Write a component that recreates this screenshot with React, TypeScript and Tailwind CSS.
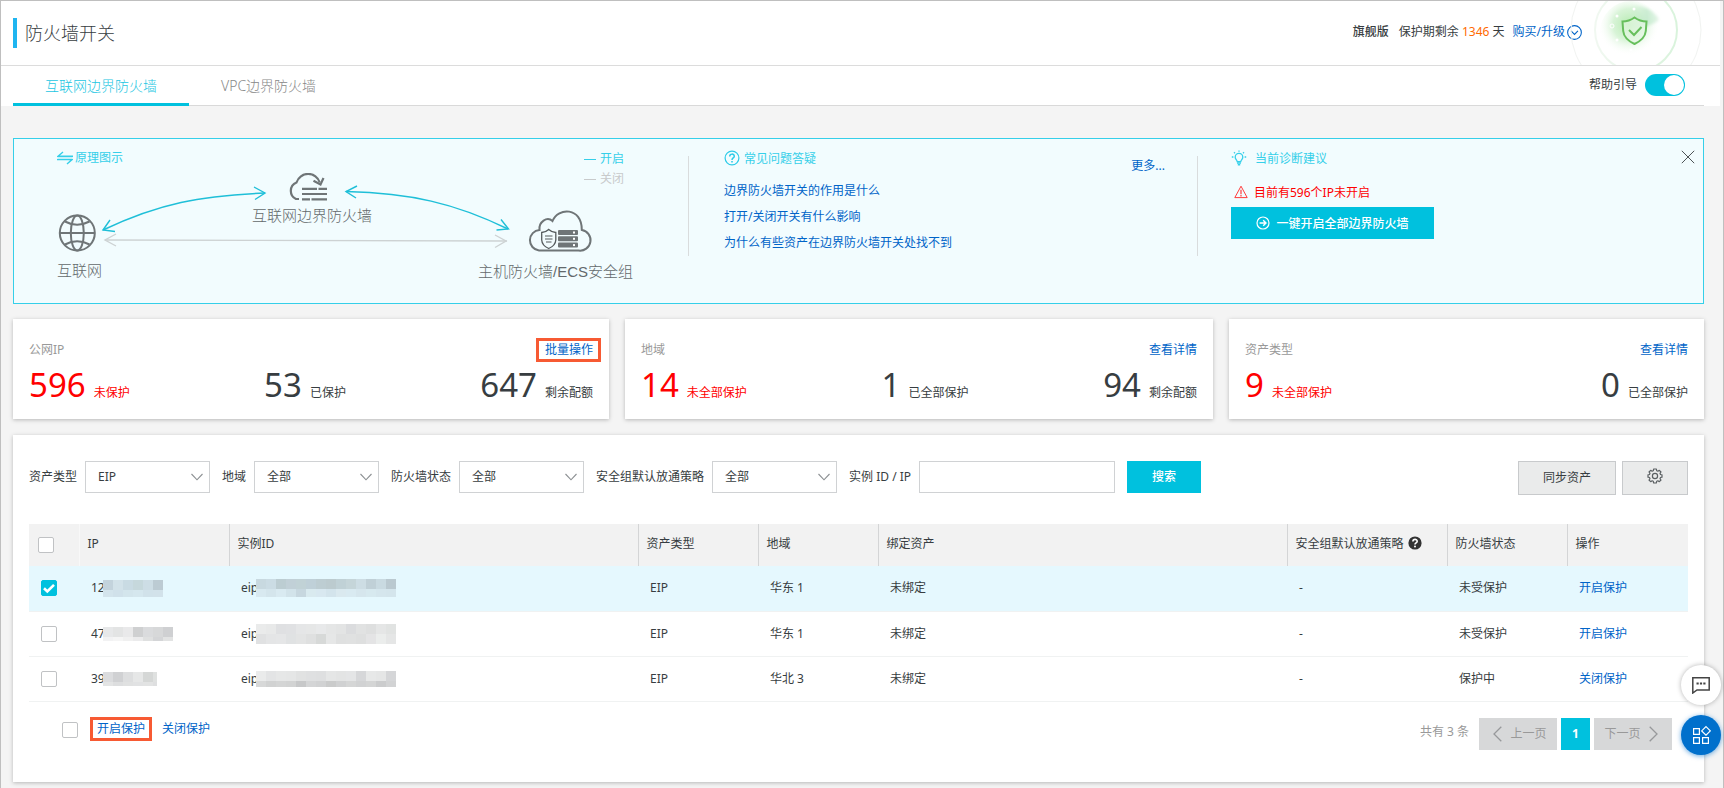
import React, { useState } from "react";

const linkClass = "text-[#0064c8] hover:underline";

/* ---------- icons ---------- */

function SwapIcon() {
  return (
    <svg className="h-4 w-4" viewBox="0 0 16 16" fill="none" stroke="#35cfe9" strokeWidth="1.4" aria-hidden="true">
      <path d="M6 2 L1 6.3 H16" />
      <path d="M0 9.6 H15 L10 14" />
      <path d="M0.5 8 H15.5" strokeWidth="0.8" opacity="0.6" />
    </svg>
  );
}

function QuestionCircleIcon() {
  return (
    <svg className="mb-[3px] h-4 w-4" viewBox="0 0 16 16" fill="none" stroke="#2ccbe8" strokeWidth="1.2" aria-hidden="true">
      <circle cx="8" cy="8" r="6.9" />
      <path d="M5.7 6.4 C5.7 3.4 10.3 3.4 10.3 6.2 C10.3 8 8 7.9 8 9.9" strokeWidth="1.5" />
      <path d="M8 11 V12.6" strokeWidth="1.6" />
    </svg>
  );
}

function BulbIcon() {
  return (
    <svg className="mb-[2px] h-4 w-4" viewBox="0 0 16 16" fill="none" stroke="#35cfe9" strokeWidth="1.3" aria-hidden="true">
      <path d="M6.2 11.6 C6.2 10.2 4.2 9.4 4.2 7.2 A3.8 3.8 0 0 1 11.8 7.2 C11.8 9.4 9.8 10.2 9.8 11.6 Z" />
      <path d="M6 13 H10 M6.8 14.8 H9.2" strokeWidth="1.5" />
      <path d="M8 0.4 V1.8 M3 2.2 L4 3.2 M13 2.2 L12 3.2 M0.8 7 H2.4 M13.6 7 H15.2" />
    </svg>
  );
}

function WarningIcon() {
  return (
    <svg className="mb-[2px] h-[14px] w-[14px]" viewBox="0 0 14 14" fill="none" stroke="#ff3b3b" aria-hidden="true">
      <path d="M7 1.2 L13.2 12.6 H0.8 Z" strokeLinejoin="round" />
      <path d="M7 4.8 V9.2 M7 10 V11.4" strokeWidth="1.2" />
    </svg>
  );
}

function ArrowCircleIcon() {
  return (
    <svg className="mb-[2px] h-[14px] w-[14px]" viewBox="0 0 14 14" fill="none" stroke="#fff" strokeWidth="1.2" aria-hidden="true">
      <circle cx="7" cy="7" r="6" />
      <path d="M3.6 7 H10 M7.2 4.2 L10 7 L7.2 9.8" strokeWidth="1.4" />
    </svg>
  );
}

function ShieldBadge() {
  return (
    <svg className="h-16 w-[134px]" viewBox="0 0 134 64" fill="none" aria-hidden="true">
      <defs>
        <radialGradient id="glow" cx="0.46" cy="0.38" r="0.5">
          <stop offset="0" stopColor="#b5eab0" />
          <stop offset="0.5" stopColor="#cbf0ca" stopOpacity="0.75" />
          <stop offset="1" stopColor="#fff" stopOpacity="0" />
        </radialGradient>
        <linearGradient id="ring" x1="0" y1="0" x2="1" y2="0">
          <stop offset="0" stopColor="#f1f8f1" />
          <stop offset="1" stopColor="#d9f3dc" />
        </linearGradient>
        <linearGradient id="beam" x1="0" y1="0" x2="1" y2="0">
          <stop offset="0" stopColor="#c4ebc9" stopOpacity="0" />
          <stop offset="0.6" stopColor="#b9e6c4" stopOpacity="0.7" />
          <stop offset="1" stopColor="#b9e6c4" stopOpacity="0.4" />
        </linearGradient>
        <filter id="soft" x="-20%" y="-20%" width="140%" height="140%">
          <feGaussianBlur stdDeviation="1.500" />
        </filter>
      </defs>
      <circle cx="68" cy="29" r="65" stroke="#f1f3f1" />
      <circle cx="68" cy="29" r="41" stroke="url(#ring)" strokeWidth="2" />
      <circle cx="63" cy="31" r="31" fill="url(#glow)" />
      <path d="M66 28 L60 5 Q80 2 91 18 Q90 23 66 28 Z" fill="url(#beam)" filter="url(#soft)" />
      <g fill="#fff">
        <circle cx="49" cy="15" r="1.5" />
        <circle cx="66" cy="8" r="1.5" />
        <circle cx="49" cy="39" r="1.5" />
        <circle cx="63" cy="49" r="1.5" />
      </g>
      <circle cx="44" cy="25" r="2" stroke="#fff" />
      <path d="M66.500 16.500 Q72 20.500 78.500 20.500 L77.800 30 Q77 38 66.500 43 Q56 38 55.200 30 L54.500 20.500 Q61 20.500 66.500 16.500 Z" stroke="#67bf5c" strokeWidth="2" fill="#e9f8e8" fillOpacity="0.6" />
      <path d="M61 29 L66 34 L73.500 26" stroke="#67bf5c" strokeWidth="2" />
    </svg>
  );
}

function FlowDrawing() {
  return (
    <svg className="block h-[113px] w-[600px]" viewBox="57 173 600 113" fill="none" aria-hidden="true">
      <g stroke="#1fbfd8" strokeWidth="1.4">
        <path d="M103 230 C160 203 200 196 265 193" />
        <path d="M110 220 L103 230 L115 231.500" />
        <path d="M254 187 L265 193 L255 199.500" />
        <path d="M346 191.500 C410 193 455 203 508 229" />
        <path d="M357 186 L346 191.500 L356 198" />
        <path d="M501 219.500 L508.500 229 L496.500 230" />
      </g>
      <g stroke="#cdd2d3" strokeWidth="1.4">
        <path d="M105 240 L507 241" />
        <path d="M116 234 L105 240 L116 246" />
        <path d="M495 235 L506 241 L495 247.500" />
      </g>
      {/* globe */}
      <g stroke="#6f7577" strokeWidth="2">
        <circle cx="77.300" cy="233" r="17.500" />
        <ellipse cx="77.300" cy="233" rx="6.500" ry="17.500" />
        <path d="M60 233 H95 M65 221.500 Q77 228 89.500 221.500 M65 244.500 Q77 238 89.500 244.500" />
      </g>
      {/* cloud with brick wall */}
      <g stroke="#6f7577" strokeWidth="2.200">
        <path d="M299 199 H296 A9 9 0 0 1 296.500 182.500 A12.200 12.200 0 0 1 319.800 182.500" />
        <path d="M313.500 180.800 L320.500 184.500 L323.500 178" />
        <path d="M302 188.800 H317 M318.500 188.800 H327 M302 194 H327 M302 199.300 H310 M311.500 199.300 H327" />
      </g>
      {/* cloud with shield and servers */}
      <path d="M539 250.500 A10.300 10.300 0 0 1 539.500 230 C538.500 222 547 216 552.500 221 C558 207 582 207 581.800 230 A10.300 10.300 0 0 1 578.500 250.500 Z" stroke="#6f7577" strokeWidth="2" />
      <path d="M548.700 229.500 Q552 232.500 555.800 232.500 V240 Q555.500 245.500 548.700 248.500 Q542 245.500 541.700 240 V232.500 Q545.500 232.500 548.700 229.500 Z" stroke="#555b5d" strokeWidth="1.300" />
      <path d="M545 236 H552.500 M545 239 H552.500 M546 242 H551.500" stroke="#555b5d" strokeWidth="1.200" />
      <g fill="#6f7577">
        <rect x="558" y="230" width="20" height="5" rx="1" />
        <rect x="558" y="236.300" width="20" height="5" rx="1" />
        <rect x="558" y="242.600" width="20" height="5" rx="1" />
      </g>
      <g fill="#fff">
        <rect x="573" y="231.500" width="2" height="2" />
        <rect x="573" y="237.800" width="2" height="2" />
        <rect x="573" y="244.100" width="2" height="2" />
      </g>
    </svg>
  );
}

function ChevronDown() {
  return (
    <svg className="pointer-events-none absolute right-[7px] top-3 h-2 w-3" viewBox="0 0 12 8" fill="none" stroke="#8c9093" strokeWidth="1.1" aria-hidden="true">
      <path d="M0.500 1 L6 6.800 L11.500 1" />
    </svg>
  );
}

function GearIcon() {
  return (
    <svg className="h-4 w-4" viewBox="0 0 16 16" fill="none" stroke="#5b6063" strokeWidth="1.200" aria-hidden="true">
      <path
        strokeLinejoin="round"
        d="M6.700 1 H9.300 L9.700 2.700 L10.900 3.200 L12.300 2.300 L14 4 L13 5.300 L13.500 6.500 L15 6.800 V9.200 L13.500 9.500 L13 10.700 L14 12 L12.300 13.700 L10.900 12.800 L9.700 13.300 L9.300 15 H6.700 L6.300 13.300 L5.100 12.800 L3.700 13.700 L2 12 L3 10.700 L2.500 9.500 L1 9.200 V6.800 L2.500 6.500 L3 5.300 L2 4 L3.700 2.300 L5.100 3.200 L6.300 2.700 Z"
      />
      <circle cx="8" cy="8" r="2.600" />
    </svg>
  );
}

/* ---------- small controls ---------- */

function Tick({ label, checked, onChange }: { label: string; checked: boolean; onChange: () => void }) {
  return (
    <span className="relative block h-4 w-4">
      <input
        type="checkbox"
        aria-label={label}
        checked={checked}
        onChange={onChange}
        className="block h-4 w-4 appearance-none rounded-[2px] border border-[#c0c2c4] bg-white checked:border-[#00c1de] checked:bg-[#00c1de]"
      />
      {checked && (
        <svg className="pointer-events-none absolute inset-0 h-4 w-4" viewBox="0 0 16 16" fill="none" stroke="#fff" strokeWidth="2.600" aria-hidden="true">
          <path d="M3 8.300 L6.300 11.500 L13 4.800" />
        </svg>
      )}
    </span>
  );
}

function Filter({ id, label, options }: { id: string; label: string; options: string[] }) {
  return (
    <div className="flex items-center gap-2">
      <label htmlFor={id}>{label}</label>
      <div className="relative">
        <select id={id} className="block h-8 w-[125px] appearance-none border border-[#d0d2d4] bg-white px-3 text-[#373d41]">
          {options.map((o) => (
            <option key={o}>{o}</option>
          ))}
        </select>
        <ChevronDown />
      </div>
    </div>
  );
}

/* ---------- statistics ---------- */

type Stat = { value: string; label: string; alert?: boolean };

function StatCard({ title, action, marked, stats, grow }: { title: string; action: string; marked?: boolean; stats: Stat[]; grow: string }) {
  return (
    <section className={`${grow} h-[100px] bg-white px-4 shadow-[0_1px_4px_rgba(0,0,0,0.25)]`}>
      <div className="flex h-[43px] items-end justify-between">
        <h2 className="pb-[3px] leading-[18px] text-[#999]">{title}</h2>
        <a
          href="#"
          className={marked ? `${linkClass} -mr-2 border-[3px] border-[#f75a33] pl-[6px] pr-[5px] leading-[18px]` : `${linkClass} pb-[3px] leading-[18px]`}
        >
          {action}
        </a>
      </div>
      <dl className="flex justify-between">
        {stats.map((s) => (
          <div key={s.label} className={`flex flex-row-reverse items-baseline gap-2 ${s.alert ? "text-[#f00]" : "text-[#373d41]"}`}>
            <dt>{s.label}</dt>
            <dd className="text-[33px] leading-[46px]">{s.value}</dd>
          </div>
        ))}
      </dl>
    </section>
  );
}

/* ---------- masked values ---------- */

type MaskShape = { width: number; rows: number[]; shades: string[][] };

function Mask({ mask }: { mask: MaskShape }) {
  const height = mask.rows.reduce((a, b) => a + b, 0);
  let y = 0;
  return (
    <svg className="-ml-[2px] block" width={mask.width} height={height} shapeRendering="crispEdges" aria-hidden="true">
      {mask.shades.map((row, r) => {
        const top = y;
        y += mask.rows[r];
        return row.map((c, i) => <rect key={`${r}-${i}`} x={i * 10} y={top} width="10" height={mask.rows[r]} fill={c} />);
      })}
    </svg>
  );
}

const rows: { ip: string; ipMask: MaskShape; id: string; idMask: MaskShape; region: string; status: string; action: string }[] = [
  {
    ip: "12",
    ipMask: {
      width: 60,
      rows: [10, 7],
      shades: [
        ["#c3d3dc", "#d2e2e9", "#c9dbe3", "#c6d8dc", "#cddde5", "#bccbd3"],
        ["#d3e4ec", "#d0e1ea", "#d3e5ec", "#d5e7ee", "#d1e2ea", "#d2e2ea"],
      ],
    },
    id: "eip",
    idMask: {
      width: 140,
      rows: [10, 8],
      shades: [
        ["#c8d9e0", "#cbdce4", "#bccdd2", "#c1d0d7", "#c1d2d6", "#bfd0d8", "#bdcdd2", "#bccbcf", "#c0d1d6", "#c5d5d9", "#cddde4", "#c0d0d7", "#c9dae1", "#bac9d0"],
        ["#d8e9f0", "#d4e5ec", "#d9eaf1", "#d2e3ea", "#c7d7df", "#d9eaef", "#d8e8f0", "#d3e4ec", "#dae9ef", "#d9eaf1", "#d6e6ed", "#d7e9ef", "#d5e6ed", "#d4e5ec"],
      ],
    },
    region: "华东 1",
    status: "未受保护",
    action: "开启保护",
  },
  {
    ip: "47",
    ipMask: {
      width: 70,
      rows: [10, 4],
      shades: [
        ["#e7e8e9", "#e3e4e4", "#e9e9ea", "#cfd0d1", "#dadbdd", "#d7d8d9", "#cfd0d2"],
        ["#f2f2f3", "#f5f5f5", "#f0f0f0", "#ebebec", "#dfe0e0", "#d4d5d7", "#e2e3e3"],
      ],
    },
    id: "eip",
    idMask: {
      width: 140,
      rows: [10, 10],
      shades: [
        ["#eaebeb", "#e8e9e9", "#dfe0e2", "#e0e1e3", "#e5e6e7", "#e6e7e7", "#e8e9ea", "#e5e6e6", "#e3e4e4", "#dbdcde", "#e1e2e2", "#dedfdf", "#e5e6e6", "#e1e3e2"],
        ["#e0e1e2", "#e4e5e6", "#e5e6e7", "#e0e2e3", "#e3e4e4", "#dfe0e0", "#d7d9d8", "#e6e7e7", "#dfe0e0", "#e0e1e1", "#dedfdf", "#e4e4e5", "#ebedec", "#e5e6e6"],
      ],
    },
    region: "华东 1",
    status: "未受保护",
    action: "开启保护",
  },
  {
    ip: "39",
    ipMask: {
      width: 54,
      rows: [10, 4],
      shades: [
        ["#dbdcde", "#d0d1d3", "#dddedf", "#e6e7e7", "#d5d7d6", "#dfe1e0"],
        ["#e3e4e4", "#dddedf", "#e0e1e1", "#e1e2e3", "#e2e3e3", "#dedfe0"],
      ],
    },
    id: "eip",
    idMask: {
      width: 140,
      rows: [10, 6],
      shades: [
        ["#eaebeb", "#e3e4e5", "#e6e7e7", "#e5e6e6", "#e1e2e2", "#dfe0e1", "#dedfe0", "#e5e6e6", "#e3e4e4", "#e4e5e6", "#d6d7d9", "#e7e8e8", "#e5e6e6", "#d5d6d8"],
        ["#d7d8d8", "#d1d2d2", "#d4d5d5", "#d2d3d3", "#c7c8c9", "#d4d5d6", "#d1d2d3", "#cacbcb", "#d0d1d2", "#d5d6d6", "#d1d2d3", "#d4d5d5", "#cbcccd", "#d2d3d4"],
      ],
    },
    region: "华北 3",
    status: "保护中",
    action: "关闭保护",
  },
];

const headCell = "border-l border-[#d4d5d6] pl-2 pb-[2px] text-left font-normal";

export default function App() {
  const [guide, setGuide] = useState(true);
  const [selected, setSelected] = useState<boolean[]>([true, false, false]);
  const [all, setAll] = useState(false);

  const toggleRow = (i: number) => setSelected((s) => s.map((v, n) => (n === i ? !v : v)));
  const toggleAll = () => {
    setAll(!all);
    setSelected(selected.map(() => !all));
  };

  return (
    <div className="min-h-screen border border-[#bfbfbf] bg-[#f4f4f4] pb-[6px] font-['Noto_Sans','Noto_Sans_CJK_SC',sans-serif] text-xs leading-[18px] text-[#373d41]">
      <div className="mr-[3px] bg-white">
        <header className="flex h-[65px] items-center justify-between border-b border-[#dcdcdc] pl-3">
          <h1 className="border-l-4 border-[#1fb5f0] pl-2 text-[18px] font-light leading-[30px]">防火墙开关</h1>
          <div className="flex h-16 items-center pr-[18px]">
            <div className="flex items-center pb-[2px]">
              <strong className="font-medium">旗舰版</strong>
              <span className="ml-[10px]">
                保护期剩余 <span className="text-[#ff6a00]">1346</span> 天
              </span>
              <a href="#" className={`${linkClass} ml-2 flex items-center gap-[2px]`}>
                购买/升级
                <svg className="h-[15px] w-[15px]" viewBox="0 0 14 14" fill="none" stroke="#0064c8" aria-hidden="true">
                  <circle cx="7" cy="7" r="6.400" />
                  <path d="M3.800 5.500 L7 8.800 L10.200 5.500" />
                </svg>
              </a>
            </div>
            <div className="-ml-[14px]">
              <ShieldBadge />
            </div>
          </div>
        </header>

        <div className="pl-3 pr-4">
          <div className="flex h-10 items-stretch justify-between border-b border-[#d9d9d9]">
            <nav className="flex text-sm font-light">
              <a href="#" className="-mb-px flex items-center border-b-[3px] border-[#00c1de] px-8 pt-[2px] text-[#1cc6e2]">
                互联网边界防火墙
              </a>
              <a href="#" className="flex items-center px-8 text-[#888]">
                VPC边界防火墙
              </a>
            </nav>
            <label className="mr-[19px] flex items-center gap-2 pb-px">
              帮助引导
              <span className="relative block h-[22px] w-10">
                <input
                  type="checkbox"
                  role="switch"
                  checked={guide}
                  onChange={() => setGuide(!guide)}
                  className="peer block h-[22px] w-10 appearance-none rounded-full bg-[#c4c6c8] checked:bg-[#00c1de]"
                />
                <span className="pointer-events-none absolute left-px top-px h-5 w-5 rounded-full bg-white peer-checked:left-[19px]" />
              </span>
            </label>
          </div>
        </div>
      </div>

      <main className="pl-3 pr-[19px]">
        <section className="relative mt-8 flex h-[166px] border border-[#35cfe9] bg-[#f2fcfe]">
          <div className="w-[674px] shrink-0 pl-[43px] pt-[10px]">
            <div className="mr-16 flex items-start justify-between">
              <h2 className="flex items-center gap-[2px] text-[#35cfe9]">
                <SwapIcon />
                原理图示
              </h2>
              <ul className="leading-5">
                <li className="flex items-center gap-1 text-[#35cfe9]">
                  <span className="h-px w-3 bg-[#35cfe9]" />
                  开启
                </li>
                <li className="flex items-center gap-1 text-[#c8cacb]">
                  <span className="h-px w-3 bg-[#c8cacb]" />
                  关闭
                </li>
              </ul>
            </div>
            <div className="relative -mt-4 font-['Liberation_Sans','Noto_Sans_CJK_SC',sans-serif] text-[15px] font-light leading-5 text-[#63696b]">
              <FlowDrawing />
              <span className="absolute left-0 top-[88px] whitespace-nowrap">互联网</span>
              <span className="absolute left-[195px] top-[33px] whitespace-nowrap">互联网边界防火墙</span>
              <span className="absolute left-[421px] top-[89px] whitespace-nowrap">主机防火墙/ECS安全组</span>
            </div>
          </div>

          <div className="mt-[17px] h-[100px] w-[509px] shrink-0 border-l border-[#d9dcdd] pl-[35px]">
            <div className="-mt-[7px] flex justify-between pr-8">
              <h2 className="flex h-5 items-center gap-1 text-[#35cfe9]">
                <QuestionCircleIcon />
                常见问题答疑
              </h2>
              <a href="#" className={`${linkClass} mt-2`}>
                更多...
              </a>
            </div>
            <ul className="mt-[3px] leading-[26px]">
              {["边界防火墙开关的作用是什么", "打开/关闭开关有什么影响", "为什么有些资产在边界防火墙开关处找不到"].map((q) => (
                <li key={q}>
                  <a href="#" className={linkClass}>
                    {q}
                  </a>
                </li>
              ))}
            </ul>
          </div>

          <div className="mt-[17px] h-[100px] border-l border-[#d9dcdd] pl-[33px]">
            <h2 className="-mt-[6px] flex items-center gap-2 text-[#35cfe9]">
              <BulbIcon />
              当前诊断建议
            </h2>
            <p className="mt-4 flex items-center gap-[6px] pl-[3px] text-[#f00]">
              <WarningIcon />
              目前有596个IP未开启
            </p>
            <button type="button" className="mt-[5px] flex h-8 w-[203px] items-center justify-center gap-[6px] bg-[#00c1de] pt-[2px] font-medium text-white">
              <ArrowCircleIcon />
              一键开启全部边界防火墙
            </button>
          </div>

          <button type="button" aria-label="关闭" className="absolute right-2 top-[11px]">
            <svg className="h-[14px] w-[14px]" viewBox="0 0 14 14" stroke="#4d5356" fill="none" aria-hidden="true">
              <path d="M0.800 0.800 L13.200 13.200 M13.200 0.800 L0.800 13.200" />
            </svg>
          </button>
        </section>

        <div className="mt-[15px] flex gap-4">
          <StatCard
            grow="grow-[564] basis-0"
            title="公网IP"
            action="批量操作"
            marked
            stats={[
              { value: "596", label: "未保护", alert: true },
              { value: "53", label: "已保护" },
              { value: "647", label: "剩余配额" },
            ]}
          />
          <StatCard
            grow="grow-[556] basis-0"
            title="地域"
            action="查看详情"
            stats={[
              { value: "14", label: "未全部保护", alert: true },
              { value: "1", label: "已全部保护" },
              { value: "94", label: "剩余配额" },
            ]}
          />
          <StatCard
            grow="grow-[443] basis-0"
            title="资产类型"
            action="查看详情"
            stats={[
              { value: "9", label: "未全部保护", alert: true },
              { value: "0", label: "已全部保护" },
            ]}
          />
        </div>

        <section className="mt-4 bg-white px-4 pb-8 pt-[26px] shadow-[0_1px_4px_rgba(0,0,0,0.25)]">
          <div className="flex items-start justify-between">
            <form className="flex items-center gap-3" onSubmit={(e) => e.preventDefault()}>
              <Filter id="asset" label="资产类型" options={["EIP"]} />
              <Filter id="region" label="地域" options={["全部"]} />
              <Filter id="state" label="防火墙状态" options={["全部"]} />
              <Filter id="policy" label="安全组默认放通策略" options={["全部"]} />
              <div className="flex items-center gap-2">
                <label htmlFor="keyword">实例 ID / IP</label>
                <input id="keyword" type="text" className="h-8 w-[196px] border border-[#d0d2d4] px-2" />
              </div>
              <button type="submit" className="h-8 w-[74px] bg-[#00c1de] font-medium text-white">
                搜索
              </button>
            </form>
            <div className="flex gap-[6px]">
              <button type="button" className="h-[34px] w-[98px] border border-[#c8cacc] bg-[#eaebeb]">
                同步资产
              </button>
              <button type="button" aria-label="设置" className="flex h-[34px] w-[66px] items-center justify-center border border-[#c8cacc] bg-[#eaebeb] pb-1">
                <GearIcon />
              </button>
            </div>
          </div>

          <table className="mt-[29px] w-full table-fixed border-collapse">
            <colgroup>
              <col className="w-[50px]" />
              <col className="w-[150px]" />
              <col />
              <col className="w-[120px]" />
              <col className="w-[120px]" />
              <col />
              <col className="w-[160px]" />
              <col className="w-[120px]" />
              <col className="w-[121px]" />
            </colgroup>
            <thead>
              <tr className="h-[42px] bg-[#f2f2f2]">
                <th className="pl-[9px]">
                  <Tick label="全选" checked={all} onChange={toggleAll} />
                </th>
                <th className="border-l border-[#f8f8f8] pb-[2px] pl-2 text-left font-normal">IP</th>
                <th className={headCell}>实例ID</th>
                <th className={headCell}>资产类型</th>
                <th className={headCell}>地域</th>
                <th className={headCell}>绑定资产</th>
                <th className={headCell}>
                  <span className="flex items-center gap-1">
                    安全组默认放通策略
                    <svg className="mb-[2px] h-[14px] w-[14px]" viewBox="0 0 14 14" aria-hidden="true">
                      <circle cx="7" cy="7" r="6.600" fill="#333" />
                      <path d="M4.900 5.500 C4.900 2.700 9.200 2.800 9.200 5.300 C9.200 6.900 7 6.900 7 8.500" fill="none" stroke="#fff" strokeWidth="1.600" />
                      <circle cx="7" cy="10.600" r="1" fill="#fff" />
                    </svg>
                  </span>
                </th>
                <th className={headCell}>防火墙状态</th>
                <th className={headCell}>操作</th>
              </tr>
            </thead>
            <tbody>
              {rows.map((r, i) => (
                <tr key={r.ip} className={`h-[45px] border-b border-[#f0f2f2] ${selected[i] ? "bg-[#e5f8fe]" : "bg-white"}`}>
                  <td className="pl-3">
                    <Tick label={`选择 ${r.ip}`} checked={selected[i]} onChange={() => toggleRow(i)} />
                  </td>
                  <td className="pl-3">
                    <span className="flex items-center">
                      {r.ip}
                      <Mask mask={r.ipMask} />
                    </span>
                  </td>
                  <td className="pl-3">
                    <span className="flex items-center">
                      {r.id}
                      <Mask mask={r.idMask} />
                    </span>
                  </td>
                  <td className="pl-3">EIP</td>
                  <td className="pl-3">{r.region}</td>
                  <td className="pl-3">未绑定</td>
                  <td className="pl-3">-</td>
                  <td className="pl-3">{r.status}</td>
                  <td className="pl-3">
                    <a href="#" className={linkClass}>
                      {r.action}
                    </a>
                  </td>
                </tr>
              ))}
            </tbody>
          </table>

          <div className="mt-[15px] flex items-start justify-between pl-[33px] pr-4">
            <div className="flex items-center">
              <div className="mr-3 mt-[2px]">
                <Tick label="选择全部" checked={all} onChange={toggleAll} />
              </div>
              <a href="#" className={`${linkClass} border-[3px] border-[#f75a33] px-1`}>
                开启保护
              </a>
              <a href="#" className={`${linkClass} ml-[10px]`}>
                关闭保护
              </a>
            </div>
            <nav aria-label="分页" className="flex items-start gap-1 pt-px text-[#999]">
              <span className="mr-[6px] pt-[5px]">共有 3 条</span>
              <button type="button" disabled className="flex h-8 w-[78px] items-center justify-center gap-2 bg-[#d7d8d9] pl-1">
                <svg className="h-4 w-[9px]" viewBox="0 0 9 16" fill="none" stroke="#97999b" strokeWidth="1.300" aria-hidden="true">
                  <path d="M8.300 0.800 L1 8 L8.300 15.200" />
                </svg>
                上一页
              </button>
              <button type="button" aria-current="page" className="h-8 w-[29px] bg-[#00c1de] font-bold text-white">
                1
              </button>
              <button type="button" disabled className="flex h-8 w-[78px] items-center justify-center gap-2 bg-[#d7d8d9] pr-1">
                下一页
                <svg className="h-4 w-[9px]" viewBox="0 0 9 16" fill="none" stroke="#97999b" strokeWidth="1.300" aria-hidden="true">
                  <path d="M0.700 0.800 L8 8 L0.700 15.200" />
                </svg>
              </button>
            </nav>
          </div>
        </section>
      </main>

      <div className="fixed bottom-[33px] right-[3px] flex flex-col gap-[10px]">
        <button type="button" aria-label="咨询" className="flex h-10 w-10 items-center justify-center rounded-full bg-white shadow-[0_0_5px_rgba(0,0,0,0.3)]">
          <svg className="h-[18px] w-5" viewBox="0 0 20 18" fill="none" stroke="#444" strokeWidth="1.500" aria-hidden="true">
            <path d="M1.800 1.800 H18.200 V14 H6 L1.800 17 Z" />
            <path d="M5.500 7.500 H7.700 M8.900 7.500 H11.100 M12.300 7.500 H14.500" strokeWidth="2.200" />
          </svg>
        </button>
        <button type="button" aria-label="应用" className="flex h-10 w-10 items-center justify-center rounded-full bg-[#0070cc] shadow-[0_1px_5px_rgba(0,112,204,0.6)]">
          <svg className="h-5 w-5" viewBox="0 0 20 20" fill="none" stroke="#fff" strokeWidth="1.200" aria-hidden="true">
            <path d="M2.600 3.600 H8.400 V9.400 H2.600 Z M2.600 12.600 H8.400 V18.400 H2.600 Z M11.600 12.600 H17.400 V18.400 H11.600 Z M15 1.600 L19.300 5.900 L15 10.200 L10.700 5.900 Z" />
          </svg>
        </button>
      </div>
    </div>
  );
}
